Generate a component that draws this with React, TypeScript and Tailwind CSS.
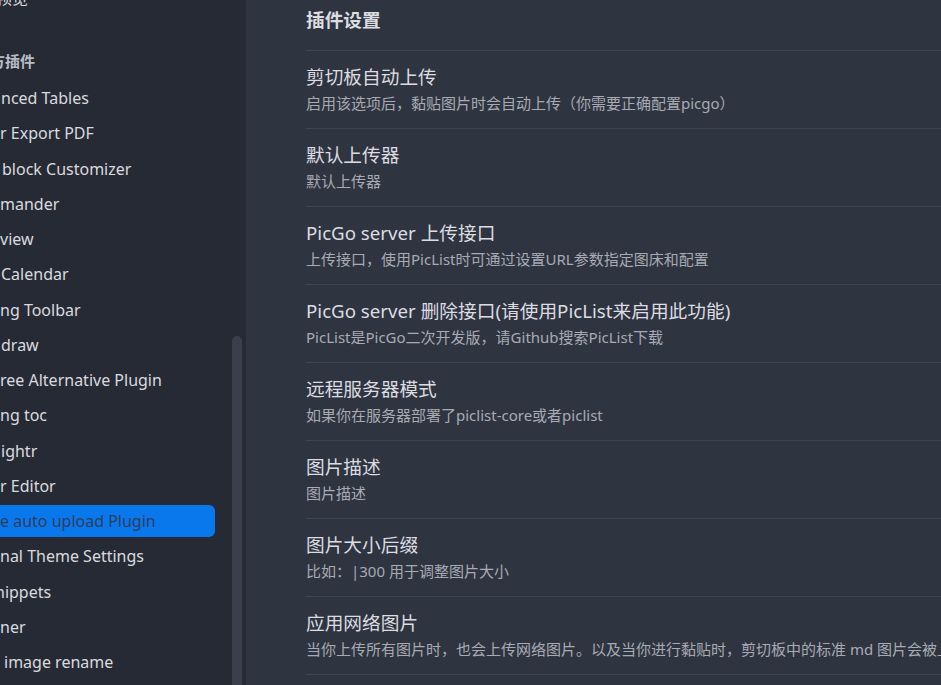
const font = { fontFamily: '"Noto Sans", "Noto Sans CJK SC", sans-serif' };

const plugins = [
  { text: "nced Tables", pad: "pl-px" },
  { text: "r Export PDF", pad: "pl-0" },
  { text: "block Customizer", pad: "pl-[2px]" },
  { text: "mander", pad: "pl-0" },
  { text: "view", pad: "pl-0" },
  { text: "Calendar", pad: "pl-px" },
  { text: "ng Toolbar", pad: "pl-0" },
  { text: "draw", pad: "pl-px" },
  { text: "ree Alternative Plugin", pad: "pl-0" },
  { text: "ng toc", pad: "pl-0" },
  { text: "ightr", pad: "pl-px" },
  { text: "r Editor", pad: "pl-0" },
  { text: "e auto upload Plugin", pad: "pl-0", active: true },
  { text: "nal Theme Settings", pad: "pl-0" },
  { text: "nippets", pad: "-ml-[5px]" },
  { text: "ner", pad: "pl-0" },
  { text: "image rename", pad: "pl-[4px]" },
];

const settings = [
  {
    title: "剪切板自动上传",
    desc: "启用该选项后，黏贴图片时会自动上传（你需要正确配置picgo）",
  },
  { title: "默认上传器", desc: "默认上传器" },
  {
    title: "PicGo server 上传接口",
    desc: "上传接口，使用PicList时可通过设置URL参数指定图床和配置",
  },
  {
    title: "PicGo server 删除接口(请使用PicList来启用此功能)",
    desc: "PicList是PicGo二次开发版，请Github搜索PicList下载",
  },
  { title: "远程服务器模式", desc: "如果你在服务器部署了piclist-core或者piclist" },
  { title: "图片描述", desc: "图片描述" },
  { title: "图片大小后缀", desc: "比如：|300 用于调整图片大小" },
  {
    title: "应用网络图片",
    desc: "当你上传所有图片时，也会上传网络图片。以及当你进行黏贴时，剪切板中的标准 md 图片会被上传",
  },
];

const Sidebar = () => (
  <aside className="relative w-[246px] shrink-0 overflow-hidden bg-[#262a35]">
    <div className="w-[215px]">
      <div className="-mt-[18px] h-8 overflow-hidden whitespace-nowrap text-[16px] leading-8 text-[#dadbdf]">
        <span className="-ml-[36px] inline-block">页面预览</span>
      </div>
      <div className="mt-[37px] mb-[11px] h-5 overflow-hidden whitespace-nowrap text-[15px] font-bold leading-5 text-[#b9bdc6]">
        <span className="-ml-[40px] inline-block">第三方插件</span>
      </div>
      <div className="flex flex-col gap-[3.25px]">
        {plugins.map((p) => (
          <div
            key={p.text}
            className={
              p.active
                ? "h-8 overflow-hidden whitespace-nowrap rounded-r-md bg-[#0a78ed] text-[16px] leading-8 text-[#2b3e5c]"
                : "h-8 overflow-hidden whitespace-nowrap text-[16px] leading-8 text-[#dadbdf]"
            }
          >
            <span className={`inline-block ${p.pad}`}>{p.text}</span>
          </div>
        ))}
      </div>
    </div>
    {/* scrollbar thumb */}
    <div className="absolute top-[336px] right-[4px] h-[400px] w-[10px] rounded-t-[5px] bg-[#3b3f4b]" />
  </aside>
);

export default function App() {
  return (
    <div className="flex h-[685px] w-[941px] overflow-hidden bg-[#2f3441]" style={font}>
      <Sidebar />
      <main className="min-w-0 flex-1 overflow-hidden pt-2 pl-[60px]">
        <h2 className="mb-[18px] h-6 whitespace-nowrap text-[18.7px] font-bold leading-6 text-[#dcdde0]">
          插件设置
        </h2>
        <div className="w-[1000px] border-y border-[#3f4452] divide-y divide-[#3f4452]">
          {settings.map((s) => (
            <div key={s.title} className="pt-[14px] pb-[15px] whitespace-nowrap">
              <div className="h-6 text-[18.7px] leading-6 text-[#dcdde0]">{s.title}</div>
              <div className="mt-1 h-5 text-[15px] leading-5 text-[#a8abb3]">{s.desc}</div>
            </div>
          ))}
        </div>
      </main>
    </div>
  );
}
